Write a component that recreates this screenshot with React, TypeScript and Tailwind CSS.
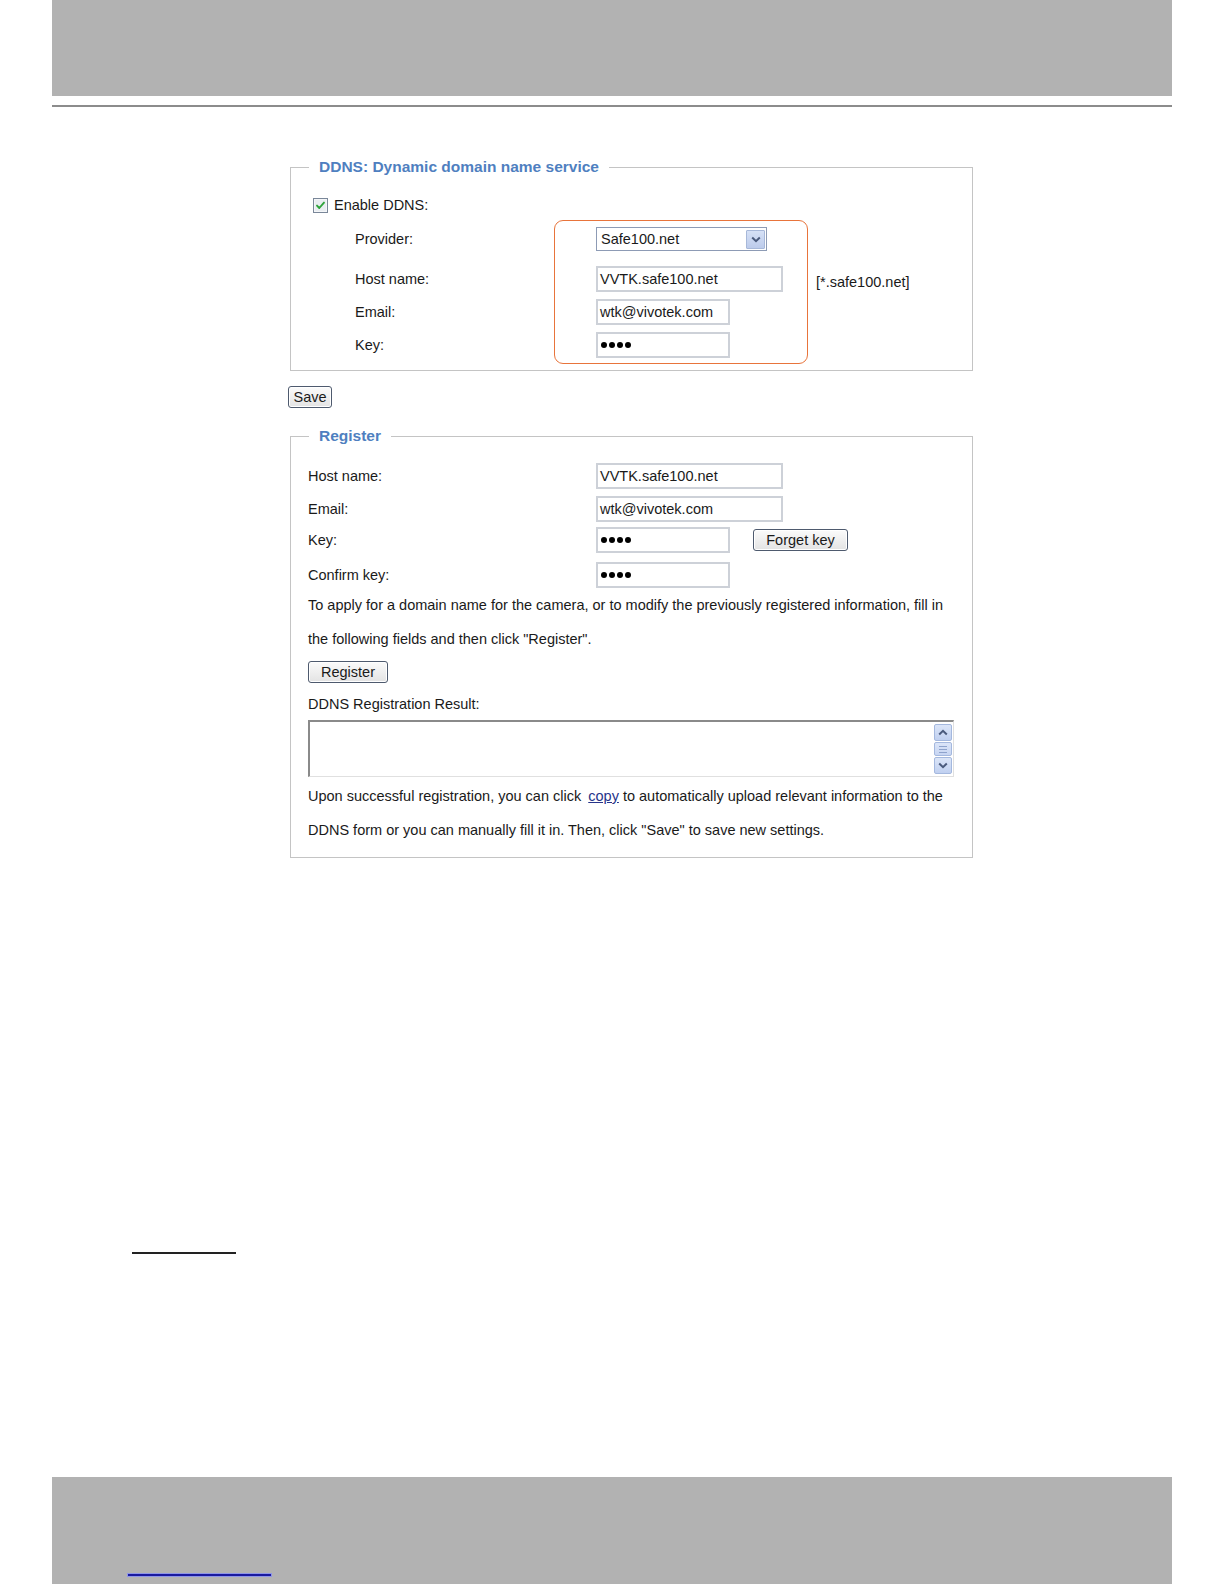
import React from "react";

const font = { fontFamily: '"Liberation Sans", Arial, sans-serif' };

function TextInput({ value, w, password }: { value: string; w: string; password?: boolean }) {
  return (
    <div
      className={`${w} h-[26px] border-2 border-[#cdd1d8] bg-white flex items-center pl-[2px] text-[14.5px] text-[#1a1a1a] leading-none`}
    >
      {password ? (
        <span className="flex gap-[2px] ml-[1px]">
          <span className="w-[6px] h-[6px] rounded-full bg-black" />
          <span className="w-[6px] h-[6px] rounded-full bg-black" />
          <span className="w-[6px] h-[6px] rounded-full bg-black" />
          <span className="w-[6px] h-[6px] rounded-full bg-black" />
        </span>
      ) : (
        value
      )}
    </div>
  );
}

function Button({ label, w }: { label: string; w: string }) {
  return (
    <div
      className={`${w} h-[22px] rounded-[3px] border border-[#4e5a6e] bg-gradient-to-b from-[#fbfbfb] to-[#e3e3e3] flex items-center justify-center text-[14.5px] text-[#1a1a1a] leading-none shadow-[inset_0_0_0_1px_#ffffff]`}
    >
      {label}
    </div>
  );
}

function Checkbox() {
  return (
    <svg width="15" height="15" viewBox="0 0 15 15">
      <rect x="0.5" y="0.5" width="14" height="14" fill="#f4f6f8" stroke="#7a8799" />
      <rect x="2" y="2" width="11" height="11" fill="#e9edf1" />
      <path d="M4 7.6 L6.3 10 L11 4.6" stroke="#2ea33a" strokeWidth="1.9" fill="none" strokeLinecap="round" strokeLinejoin="round" />
    </svg>
  );
}

function Select() {
  return (
    <div className="w-[171px] h-[24px] border border-[#8d9bb5] bg-white flex items-center justify-between pl-[4px] pr-[1px] text-[14.5px] text-[#1a1a1a] leading-none">
      <span>Safe100.net</span>
      <div className="w-[19px] h-[19px] border border-[#a7b8d9] bg-gradient-to-b from-[#d6e1f6] to-[#bccbeb] flex items-center justify-center rounded-[1px]">
        <svg width="10" height="7" viewBox="0 0 10 7">
          <path d="M1.2 1.5 L5 5.2 L8.8 1.5" stroke="#4a5a7c" strokeWidth="2" fill="none" />
        </svg>
      </div>
    </div>
  );
}

function ScrollBtn({ up }: { up?: boolean }) {
  return (
    <div className="w-[18px] h-[17px] border border-[#a4b8de] bg-gradient-to-b from-[#dbe5f8] to-[#c0d0f0] rounded-[2px] flex items-center justify-center">
      <svg width="10" height="7" viewBox="0 0 10 7">
        <path d={up ? "M1.2 5.5 L5 1.8 L8.8 5.5" : "M1.2 1.5 L5 5.2 L8.8 1.5"} stroke="#4a5a7c" strokeWidth="2" fill="none" />
      </svg>
    </div>
  );
}

export default function App() {
  return (
    <div className="w-[1224px] h-[1584px] bg-white flex flex-col text-[#1a1a1a]" style={font}>
      {/* header */}
      <div className="ml-[52px] w-[1120px] h-[96px] bg-[#b2b2b2]" />
      <div className="ml-[52px] w-[1120px] h-[2px] mt-[9px] bg-[#8c8c8c]" />

      {/* content */}
      <div className="ml-[288px] mt-[51px] flex flex-col w-[690px]">
        {/* DDNS fieldset */}
        <div className="relative ml-[2px]">
          <fieldset className="w-[683px] border border-[#c4c4c4] m-0 p-0">
            <legend className="ml-[18px] px-[10px] text-[15.5px] leading-[18px] font-bold text-[#4f7fc0]">
              DDNS: Dynamic domain name service
            </legend>
            <div className="flex flex-col pl-[22px] pt-[19px] pb-[12px] text-[14.5px]">
              <div className="flex items-center h-[20px] gap-[6px]">
                <Checkbox />
                <span className="mt-[1px]">Enable DDNS:</span>
              </div>
              <div className="mt-[12px] flex items-center h-[24px] pl-[42px]">
                <span className="w-[241px] mt-[2px]">Provider:</span>
                <Select />
              </div>
              <div className="mt-[15px] flex items-center h-[26px] pl-[42px]">
                <span className="w-[241px] mt-[2px]">Host name:</span>
                <TextInput value="VVTK.safe100.net" w="w-[187px]" />
                <span className="ml-[33px] mt-[7px]">[*.safe100.net]</span>
              </div>
              <div className="mt-[7px] flex items-center h-[26px] pl-[42px]">
                <span className="w-[241px] mt-[2px]">Email:</span>
                <TextInput value="wtk@vivotek.com" w="w-[134px]" />
              </div>
              <div className="mt-[7px] flex items-center h-[26px] pl-[42px]">
                <span className="w-[241px] mt-[2px]">Key:</span>
                <TextInput value="" w="w-[134px]" password />
              </div>
            </div>
          </fieldset>
          <div className="absolute left-[264px] top-[62px] w-[254px] h-[144px] border-[1.5px] border-[#e8743b] rounded-[9px] pointer-events-none" />
        </div>

        {/* Save */}
        <div className="mt-[15px]">
          <Button label="Save" w="w-[44px]" />
        </div>

        {/* Register fieldset */}
        <fieldset className="ml-[2px] mt-[19px] w-[683px] border border-[#c4c4c4] m-0 p-0">
          <legend className="ml-[18px] px-[10px] text-[15.5px] leading-[18px] font-bold text-[#4f7fc0]">
            Register
          </legend>
          <div className="flex flex-col pl-[17px] pt-[18px] pb-[10px] text-[14.5px]">
            <div className="flex items-center h-[26px]">
              <span className="w-[288px] mt-[1px]">Host name:</span>
              <TextInput value="VVTK.safe100.net" w="w-[187px]" />
            </div>
            <div className="mt-[7px] flex items-center h-[26px]">
              <span className="w-[288px] mt-[1px]">Email:</span>
              <TextInput value="wtk@vivotek.com" w="w-[187px]" />
            </div>
            <div className="mt-[5px] flex items-center h-[26px]">
              <span className="w-[288px] mt-[1px]">Key:</span>
              <TextInput value="" w="w-[134px]" password />
              <div className="ml-[23px]">
                <Button label="Forget key" w="w-[95px]" />
              </div>
            </div>
            <div className="mt-[9px] flex items-center h-[26px]">
              <span className="w-[288px] mt-[1px]">Confirm key:</span>
              <TextInput value="" w="w-[134px]" password />
            </div>
            <p className="leading-[34px]">
              To apply for a domain name for the camera, or to modify the previously registered information, fill in
              <br />
              the following fields and then click "Register".
            </p>
            <div className="mt-[5px]">
              <Button label="Register" w="w-[80px]" />
            </div>
            <p className="mt-[10px] leading-[22px]">DDNS Registration Result:</p>
            <div className="mt-[5px] w-[646px] h-[57px] border-t-2 border-l-2 border-[#8a8a8a] border-r border-b border-r-[#e0e0e0] border-b-[#e0e0e0] bg-white flex justify-end">
              <div className="w-[19px] flex flex-col justify-between py-[2px] pr-[1px]">
                <ScrollBtn up />
                <div className="w-[18px] h-[14px] border border-[#a4b8de] bg-gradient-to-b from-[#dbe5f8] to-[#c7d5f2] rounded-[2px] flex flex-col items-center justify-center gap-[2px]">
                  <span className="w-[8px] h-[1px] bg-[#8ea3cc]" />
                  <span className="w-[8px] h-[1px] bg-[#8ea3cc]" />
                  <span className="w-[8px] h-[1px] bg-[#8ea3cc]" />
                </div>
                <ScrollBtn />
              </div>
            </div>
            <p className="leading-[34px] mt-[2px]">
              Upon successful registration, you can click{" "}
              <span className="ml-[3px] underline text-[#27348a]">copy</span> to automatically upload relevant information to the
              <br />
              DDNS form or you can manually fill it in. Then, click "Save" to save new settings.
            </p>
          </div>
        </fieldset>
      </div>

      {/* lower decoration */}
      <div className="ml-[132px] mt-[394px] w-[104px] h-[2px] bg-[#222222]" />
      <div className="flex-1" />
      <div className="ml-[52px] w-[1120px] h-[107px] bg-[#b2b2b2] flex flex-col justify-end pb-[8px]">
        <div className="ml-[76px] w-[143px] h-[2px] bg-[#1a1aa0] shadow-[0_0_0_1px_#8f95e6]" />
      </div>
    </div>
  );
}
